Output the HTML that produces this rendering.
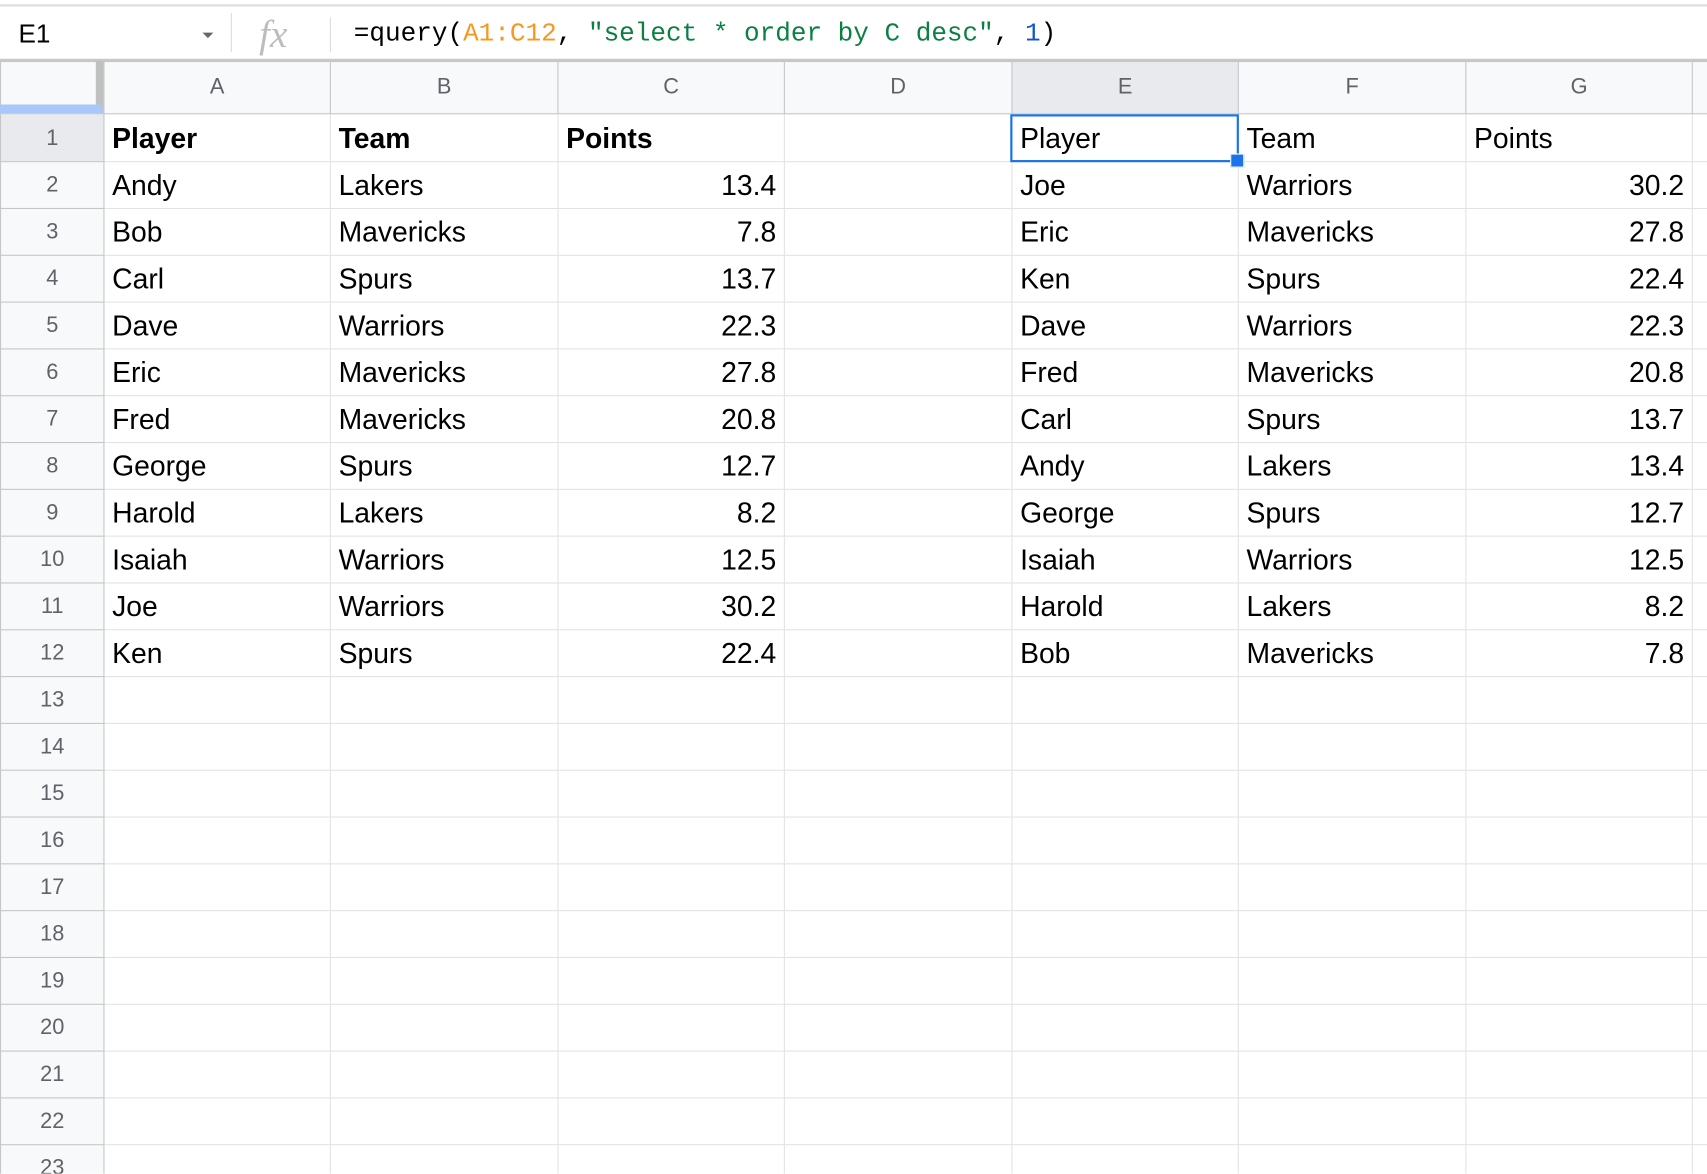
<!DOCTYPE html>
<html><head><meta charset="utf-8"><style>
html,body{margin:0;padding:0;background:#fff;overflow:hidden;width:1707px;height:1173px}
#w{position:absolute;left:0;top:0;width:1568px;height:1078px;transform:scale(1.08865);transform-origin:0 0;font-family:"Liberation Sans",Arial,sans-serif;overflow:hidden}
.topline{position:absolute;left:0;top:4px;width:1568px;height:2px;background:#dadce0}
.fb{position:absolute;left:0;top:6px;width:1568px;height:48px;background:#fff;border-bottom:2px solid #c7c7c7}
.nb{position:absolute;left:17px;top:12px;font-size:24px;color:#000}
.arr{position:absolute;left:186px;top:24px;width:0;height:0;border-left:5px solid transparent;border-right:5px solid transparent;border-top:5px solid #666}
.d1{position:absolute;left:212px;top:6px;width:1px;height:36px;background:#dadce0}
.fx{position:absolute;left:238px;top:4px;font-family:"Liberation Serif",serif;font-style:italic;font-size:36px;color:#bdbdbd}
.d2{position:absolute;left:303px;top:10px;width:1px;height:32px;background:#dadce0}
.fm{position:absolute;left:325px;top:12px;font-family:"Liberation Mono",monospace;font-size:23.9px;color:#000;white-space:pre}
table{position:absolute;left:0;top:56px;border-collapse:collapse;table-layout:fixed;width:1584px}
td{border:1px solid #e2e3e3;padding:0 7px;font-size:26px;color:#000;height:42px;overflow:hidden;white-space:nowrap;line-height:42px}
tr.h td{background:#f8f9fa;border-color:#c4c7c5;color:#5f6368;font-size:20px;text-align:center;height:47px;line-height:47px;padding:0}
td.rh{background:#f8f9fa;border-color:#c4c7c5;color:#5f6368;font-size:20px;text-align:center;padding:0}
td.sel, tr.h td.sel{background:#e8eaed}
td.n{text-align:right}
b{font-weight:bold}
</style></head><body><div id="w">
<div class="topline"></div>
<div class="fb">
<div class="nb">E1</div><div class="arr"></div><div class="d1"></div>
<div class="fx">fx</div><div class="d2"></div>
<div class="fm">=query(<span style="color:#f7981d">A1:C12</span>, <span style="color:#0b8043">"select * order by C desc"</span>, <span style="color:#1155cc">1</span>)</div>
</div>
<table>
<colgroup><col style="width:95px"><col style="width:208px"><col style="width:209px"><col style="width:208px"><col style="width:209px"><col style="width:208px"><col style="width:209px"><col style="width:208px"><col style="width:30px"></colgroup>
<tr class="h"><td></td><td>A</td><td>B</td><td>C</td><td>D</td><td class="sel">E</td><td>F</td><td>G</td><td></td></tr>
<tr style="height:44px"><td class="rh sel">1</td><td><b>Player</b></td><td><b>Team</b></td><td><b>Points</b></td><td></td><td>Player</td><td>Team</td><td>Points</td><td></td></tr>
<tr><td class="rh">2</td><td>Andy</td><td>Lakers</td><td class="n">13.4</td><td></td><td>Joe</td><td>Warriors</td><td class="n">30.2</td><td></td></tr>
<tr><td class="rh">3</td><td>Bob</td><td>Mavericks</td><td class="n">7.8</td><td></td><td>Eric</td><td>Mavericks</td><td class="n">27.8</td><td></td></tr>
<tr><td class="rh">4</td><td>Carl</td><td>Spurs</td><td class="n">13.7</td><td></td><td>Ken</td><td>Spurs</td><td class="n">22.4</td><td></td></tr>
<tr><td class="rh">5</td><td>Dave</td><td>Warriors</td><td class="n">22.3</td><td></td><td>Dave</td><td>Warriors</td><td class="n">22.3</td><td></td></tr>
<tr><td class="rh">6</td><td>Eric</td><td>Mavericks</td><td class="n">27.8</td><td></td><td>Fred</td><td>Mavericks</td><td class="n">20.8</td><td></td></tr>
<tr><td class="rh">7</td><td>Fred</td><td>Mavericks</td><td class="n">20.8</td><td></td><td>Carl</td><td>Spurs</td><td class="n">13.7</td><td></td></tr>
<tr><td class="rh">8</td><td>George</td><td>Spurs</td><td class="n">12.7</td><td></td><td>Andy</td><td>Lakers</td><td class="n">13.4</td><td></td></tr>
<tr><td class="rh">9</td><td>Harold</td><td>Lakers</td><td class="n">8.2</td><td></td><td>George</td><td>Spurs</td><td class="n">12.7</td><td></td></tr>
<tr><td class="rh">10</td><td>Isaiah</td><td>Warriors</td><td class="n">12.5</td><td></td><td>Isaiah</td><td>Warriors</td><td class="n">12.5</td><td></td></tr>
<tr><td class="rh">11</td><td>Joe</td><td>Warriors</td><td class="n">30.2</td><td></td><td>Harold</td><td>Lakers</td><td class="n">8.2</td><td></td></tr>
<tr><td class="rh">12</td><td>Ken</td><td>Spurs</td><td class="n">22.4</td><td></td><td>Bob</td><td>Mavericks</td><td class="n">7.8</td><td></td></tr>
<tr><td class="rh">13</td><td></td><td></td><td></td><td></td><td></td><td></td><td></td><td></td></tr>
<tr><td class="rh">14</td><td></td><td></td><td></td><td></td><td></td><td></td><td></td><td></td></tr>
<tr><td class="rh">15</td><td></td><td></td><td></td><td></td><td></td><td></td><td></td><td></td></tr>
<tr><td class="rh">16</td><td></td><td></td><td></td><td></td><td></td><td></td><td></td><td></td></tr>
<tr><td class="rh">17</td><td></td><td></td><td></td><td></td><td></td><td></td><td></td><td></td></tr>
<tr><td class="rh">18</td><td></td><td></td><td></td><td></td><td></td><td></td><td></td><td></td></tr>
<tr><td class="rh">19</td><td></td><td></td><td></td><td></td><td></td><td></td><td></td><td></td></tr>
<tr><td class="rh">20</td><td></td><td></td><td></td><td></td><td></td><td></td><td></td><td></td></tr>
<tr><td class="rh">21</td><td></td><td></td><td></td><td></td><td></td><td></td><td></td><td></td></tr>
<tr><td class="rh">22</td><td></td><td></td><td></td><td></td><td></td><td></td><td></td><td></td></tr>
<tr><td class="rh">23</td><td></td><td></td><td></td><td></td><td></td><td></td><td></td><td></td></tr>
</table>
<div style="position:absolute;left:88px;top:56px;width:7px;height:48px;background:#c0c0c0"></div>
<div style="position:absolute;left:0;top:96px;width:94px;height:8px;background:#a8c7fa"></div>
<div style="position:absolute;left:928px;top:105px;width:206px;height:40px;border:2px solid #1a73e8"></div>
<div style="position:absolute;left:1130px;top:141px;width:11px;height:11px;background:#1a73e8;border:1px solid #fff"></div>
</div></body></html>
